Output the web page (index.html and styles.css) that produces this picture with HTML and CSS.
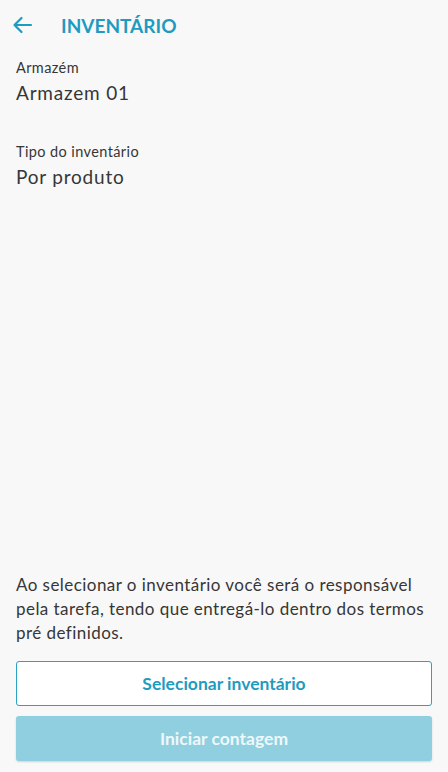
FILE: index.html
```html
<!DOCTYPE html>
<html>

<head>
    <title>Inventário</title>
    <link rel="stylesheet" href="styles.css">
</head>

<body>
    <div class="screen">
        <div class="top-bar">
            <button class="back-button" type="button">
                <svg width="24" height="24" viewBox="0 0 24 24">
                    <path d="M21 12H4.5M11.5 5l-7 7 7 7" fill="none" stroke="#1f9bc0" stroke-width="2.2" stroke-linecap="round" stroke-linejoin="round"/>
                </svg>
            </button>
            <div class="page-title">INVENTÁRIO</div>
        </div>

        <div class="details">
            <div class="field">
                <div class="field-label">Armazém</div>
                <div class="field-value">Armazem 01</div>
            </div>
            <div class="field">
                <div class="field-label">Tipo do inventário</div>
                <div class="field-value">Por produto</div>
            </div>
        </div>

        <div class="footer">
            <p class="notice">Ao selecionar o inventário você será o responsável pela tarefa, tendo que entregá-lo dentro dos termos pré definidos.</p>
            <button class="btn btn-outline" type="button">Selecionar inventário</button>
            <button class="btn btn-filled" type="button" disabled>Iniciar contagem</button>
        </div>
    </div>
</body>

</html>
```

FILE: styles.css
```css
body {
    margin: 0;
    background-color: #f8f8f8;
    font-family: "Lato", "Open Sans", sans-serif;
    color: #363636;
}

.screen {
    height: 772px;
    display: flex;
    flex-direction: column;
}

.top-bar {
    height: 50px;
    display: flex;
    align-items: center;
    padding: 0 12px 0 10px;
}

.back-button {
    background: none;
    border: none;
    padding: 0;
    width: 24px;
    height: 24px;
    cursor: pointer;
}

.back-button svg {
    display: block;
}

.page-title {
    margin-left: 27px;
    font-size: 19px;
    font-weight: bold;
    color: #1f9bc0;
}

.details {
    flex: 1;
    padding: 8px 16px 0;
}

.field {
    margin-bottom: 36px;
}

.field-label {
    font-size: 14.5px;
    line-height: 20px;
    letter-spacing: 0.4px;
}

.field-value {
    font-size: 19px;
    line-height: 26px;
    margin-top: 2px;
    letter-spacing: 0.8px;
}

.footer {
    padding: 0 16px 11px;
}

.notice {
    margin: 0 0 16px;
    font-size: 17px;
    line-height: 24px;
    letter-spacing: 0.45px;
}

.btn {
    display: block;
    width: 100%;
    height: 45px;
    border-radius: 3px;
    font-family: "Lato", "Open Sans", sans-serif;
    font-size: 17.5px;
    font-weight: bold;
    cursor: pointer;
}

.btn-outline {
    background-color: #fff;
    border: 1.5px solid #29a2c4;
    color: #1f9bc0;
    margin-bottom: 10px;
}

.btn-filled {
    background-color: #90cfdf;
    border: none;
    color: #eef8fb;
    box-shadow: 0 1px 2px rgba(0, 0, 0, 0.15);
}
```
